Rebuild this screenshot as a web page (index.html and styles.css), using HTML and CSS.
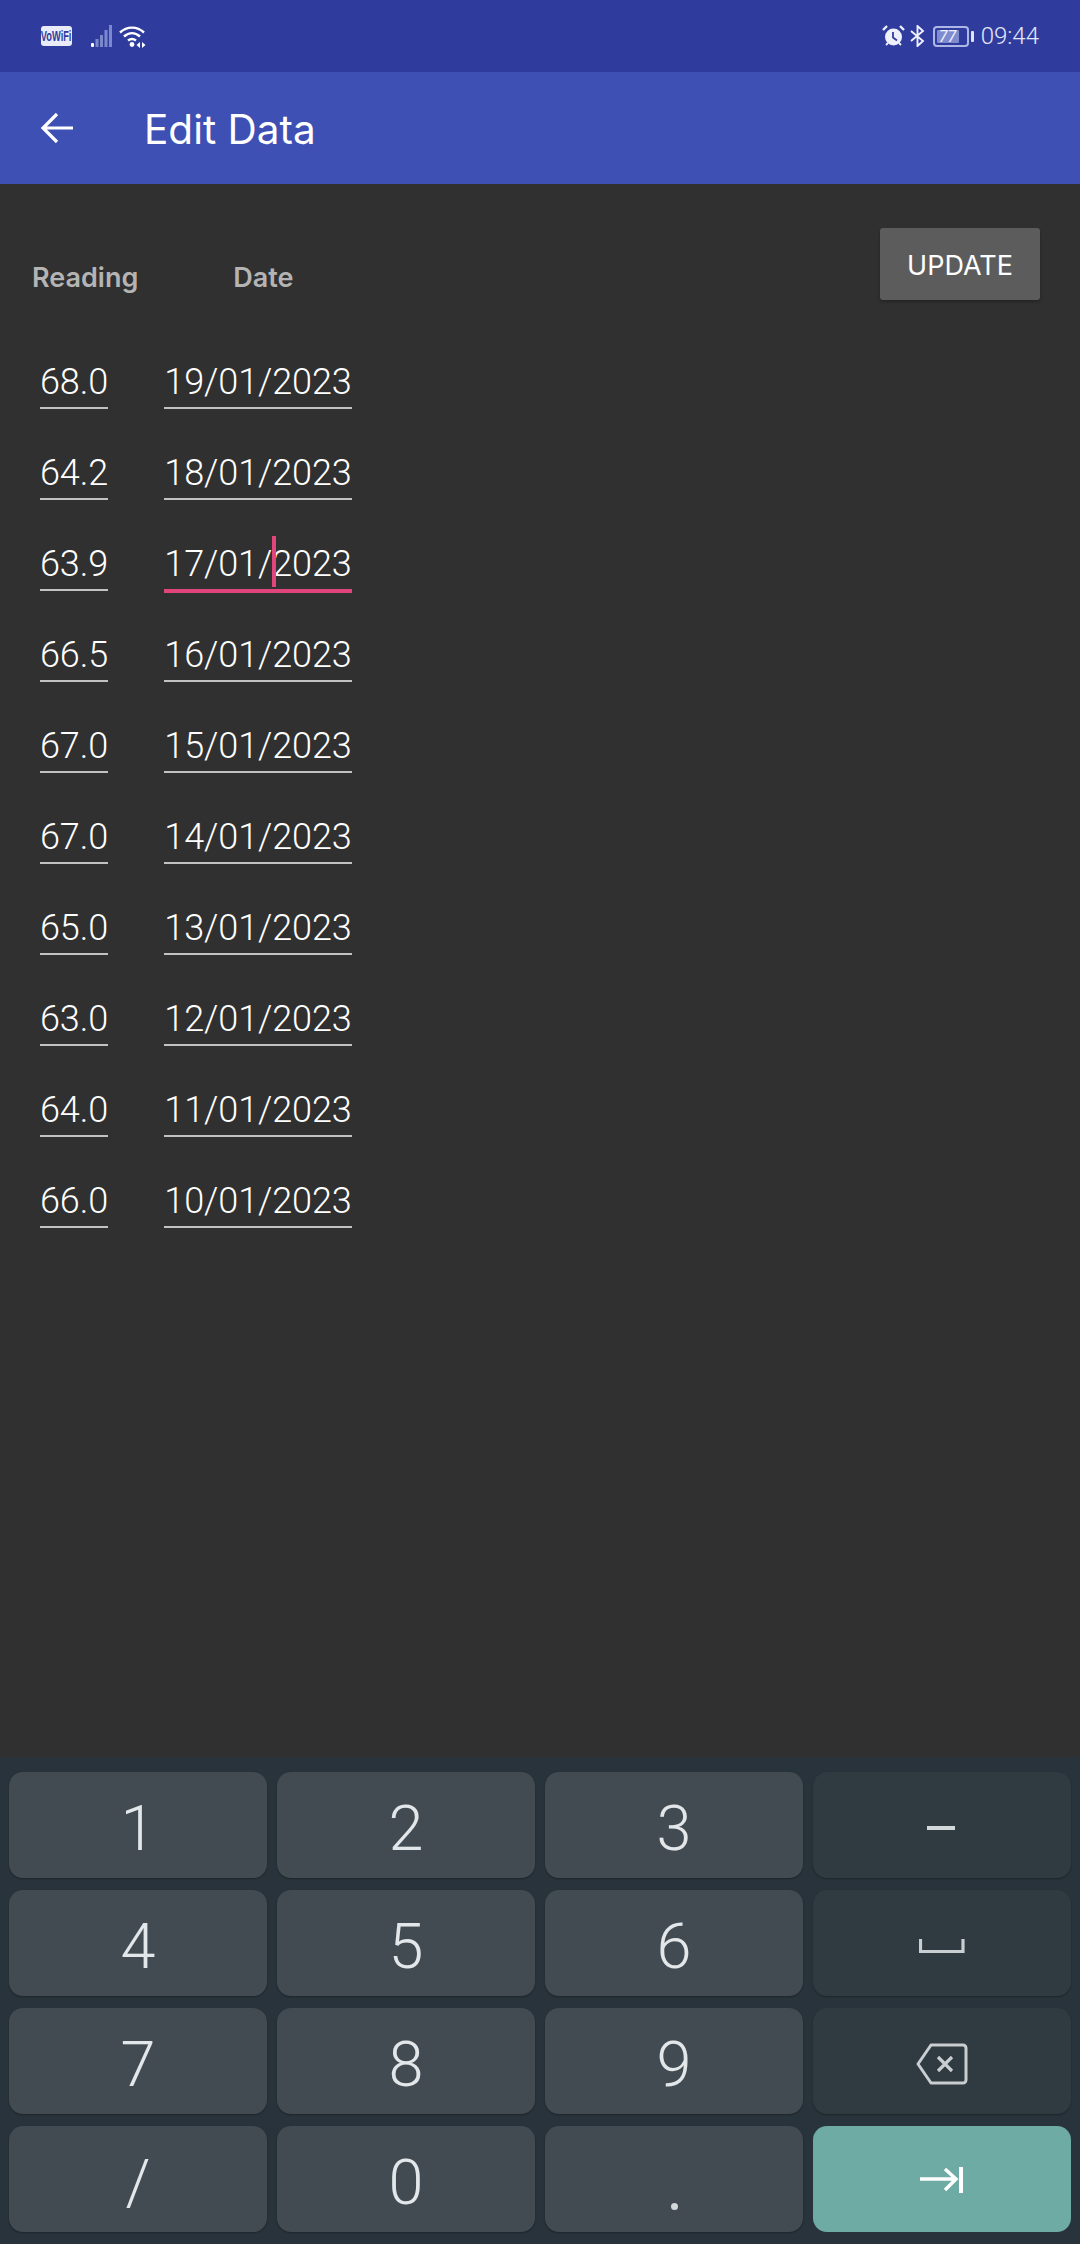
FILE: index.html
```html
<!DOCTYPE html>
<html lang="en">
<head>
<meta charset="utf-8">
<title>Edit Data</title>
<link rel="stylesheet" href="styles.css">
</head>
<body>
<div class="screen">
  <div class="status">
    <div class="status-left">
      <span class="vowifi"><span class="vowifi-text">VoWiFi</span></span>
      <svg class="signal" width="22" height="24" viewBox="0 0 22 24"><rect x="1" y="19" width="3" height="4" rx="1" fill="#fff"/><g fill="#7c88cc"><rect x="5.500" y="15" width="3" height="8"/><rect x="10" y="11" width="3" height="12"/><rect x="14.500" y="6" width="3" height="17"/><rect x="19" y="1" width="3" height="22"/></g></svg>
      <svg class="wifi" width="28" height="24" viewBox="0 0 28 24"><g fill="none" stroke="#fff" stroke-width="2.4"><path d="M1 8.5C8 2 18 2 25 8.5"/><path d="M5 12.5C10 8 16 8 21 12.5"/><path d="M9 16.5C11.5 14.5 14.5 14.5 17 16.5"/></g><circle cx="13" cy="20.500" r="2.400" fill="#fff"/><path d="M21 18v6l-3.500-3zM23 18v6l3.500-3z" fill="#fff"/></svg>
    </div>
    <div class="status-right">
      <svg class="alarm" width="23" height="22" viewBox="0 0 23 22"><circle cx="11.500" cy="12" r="8.500" fill="#eef0fb"/><path d="M11 7v5.500l4 3" fill="none" stroke="#2f3c9e" stroke-width="1.800"/><path d="M1 5l4-4M22 5l-4-4" stroke="#eef0fb" stroke-width="2.400" fill="none"/><path d="M4 20l2-2M19 20l-2-2" stroke="#eef0fb" stroke-width="1.800" fill="none"/></svg>
      <svg class="bt" width="15" height="22" viewBox="0 0 15 22"><path d="M1 6l12 10-5.500 5V1L13 6 1 16" fill="none" stroke="#eef0fb" stroke-width="1.900"/></svg>
      <div class="battery"><div class="battery-body"><div class="battery-fill"></div><span class="battery-num">77</span></div><div class="battery-nub"></div></div>
      <span class="clock">09:44</span>
    </div>
  </div>
  <div class="appbar">
    <svg class="back" width="34" height="34" viewBox="0 0 34 34"><path d="M33 17H3M17 3L3 17l14 14" fill="none" stroke="#fff" stroke-width="3.200"/></svg>
    <span class="title">Edit Data</span>
  </div>
  <main class="content">
    <div class="head">
      <span class="col-reading">Reading</span>
      <span class="col-date">Date</span>
      <button class="update">UPDATE</button>
    </div>
    <div class="rows">
      <div class="row"><span class="field num">68.0</span><span class="field date">19/01/2023</span></div>
      <div class="row"><span class="field num">64.2</span><span class="field date">18/01/2023</span></div>
      <div class="row"><span class="field num">63.9</span><span class="field date focus">17/01/<span class="caret"></span>2023</span></div>
      <div class="row"><span class="field num">66.5</span><span class="field date">16/01/2023</span></div>
      <div class="row"><span class="field num">67.0</span><span class="field date">15/01/2023</span></div>
      <div class="row"><span class="field num">67.0</span><span class="field date">14/01/2023</span></div>
      <div class="row"><span class="field num">65.0</span><span class="field date">13/01/2023</span></div>
      <div class="row"><span class="field num">63.0</span><span class="field date">12/01/2023</span></div>
      <div class="row"><span class="field num">64.0</span><span class="field date">11/01/2023</span></div>
      <div class="row"><span class="field num">66.0</span><span class="field date">10/01/2023</span></div>
    </div>
  </main>
  <div class="keyboard">
    <div class="key">1</div><div class="key">2</div><div class="key">3</div>
    <div class="key fn"><svg width="30" height="6" viewBox="0 0 30 6"><rect y="1" width="28" height="4" fill="#d3d8da"/></svg></div>
    <div class="key">4</div><div class="key">5</div><div class="key">6</div>
    <div class="key fn"><svg width="46" height="16" viewBox="0 0 46 16"><path d="M1.500 1v12.500h42.500V1" fill="none" stroke="#c9ced1" stroke-width="3.200"/></svg></div>
    <div class="key">7</div><div class="key">8</div><div class="key">9</div>
    <div class="key fn"><svg width="52" height="42" viewBox="0 0 52 42"><path d="M15 2h32a3 3 0 0 1 3 3v32a3 3 0 0 1-3 3H15L2 21z" fill="none" stroke="#c9ced1" stroke-width="3" stroke-linejoin="round"/><path d="M22 14l14 14M36 14L22 28" fill="none" stroke="#c9ced1" stroke-width="3.200"/></svg></div>
    <div class="key">/</div><div class="key">0</div><div class="key dot"><span class="dot-mark"></span></div>
    <div class="key go"><svg width="44" height="28" viewBox="0 0 44 28"><path d="M0 13h36M25 3l11 10-11 11" fill="none" stroke="#fff" stroke-width="3.400"/><rect x="39" y="1" width="4" height="26" fill="#fff"/></svg></div>
  </div>
</div>
</body>
</html>
```
FILE: styles.css
```css
* { box-sizing: border-box; }
html, body { margin: 0; padding: 0; }
body { background: #303030; font-family: "Inter", "Liberation Sans", sans-serif; }
.screen { width: 1080px; height: 2244px; display: flex; flex-direction: column; overflow: hidden; background: #303030; color: #fff; }

.status { height: 72px; flex: none; background: #2f3c9e; display: flex; justify-content: space-between; align-items: center; padding: 0 41px; }
.status-left, .status-right { display: flex; align-items: center; }
.vowifi { width: 31px; height: 20px; background: #e9ebf8; border-radius: 3px; display: flex; justify-content: center; overflow: hidden; }
.vowifi-text { display: block; flex: none; transform: scaleX(.66); color: #2f3c9e; font: 700 14px/20px "Liberation Sans", sans-serif; white-space: nowrap; }
.signal { margin-left: 18px; }
.wifi { margin-left: 7px; }
.status-right { gap: 7px; }
.alarm { margin-right: -2px; }
.battery { display: flex; align-items: center; margin-left: 1px; gap: 2px; }
.battery-body { position: relative; width: 36px; height: 21px; border: 2px solid #aeb6e6; border-radius: 4px; padding: 2px; }
.battery-fill { width: 22px; height: 100%; background: #7f8bcf; border-radius: 1px; }
.battery-num { position: absolute; left: 4px; top: 0; font: italic 400 16px/17px "Roboto", sans-serif; color: #eef0fb; }
.battery-nub { width: 3px; height: 11px; background: #dfe3f5; border-radius: 1px; }
.clock { font: 300 24px/1 "Roboto", sans-serif; color: #e3e6f6; }

.appbar { height: 112px; flex: none; background: #3e50b4; display: flex; align-items: center; padding-left: 40px; }
.title { margin: 5px 0 0 70px; font: 400 40.500px/1 "Inter", sans-serif; color: #fff; }

.content { flex: 1; }
.head { height: 169px; display: flex; align-items: flex-start; padding: 44px 40px 0 32px; }
.col-reading, .col-date { font-size: 27px; font-weight: 600; color: #b4b4b4; margin-top: 34px; line-height: 32px; }
.col-date { margin-left: 95px; }
.update { margin-left: auto; width: 160px; height: 72px; background: #5c5c5d; color: #fff; border: 0; border-radius: 3px; font: 400 27px/1 "Inter", sans-serif; box-shadow: 0 2px 3px rgba(0,0,0,.25); padding: 2px 0 0; }

.rows { display: flex; flex-direction: column; padding-left: 40px; }
.row { display: flex; height: 91px; gap: 56px; align-items: flex-start; }
.field { display: block; height: 56px; border-bottom: 2px solid #c2c2c2; font: 350 36px/58px "Roboto", sans-serif; letter-spacing: -.1px; color: #fff; white-space: nowrap; }
.num { width: 68px; text-align: center; }
.date { width: 188px; text-align: center; }
.focus { position: relative; height: 58px; border-bottom: 4px solid #e0467c; }
.caret { position: absolute; left: 108px; top: 1px; width: 4px; height: 51px; background: #e0467c; }

.keyboard { flex: none; height: 487px; background: #29333b; padding: 15px 9px 12px; display: grid; grid-template-columns: repeat(4, 258px); grid-auto-rows: 106px; column-gap: 10px; row-gap: 12px; }
.key { display: flex; align-items: center; justify-content: center; padding-top: 6px; background: #414b51; border-radius: 14px; box-shadow: 0 1px 2px rgba(0,0,0,.3); color: #e3e7ea; font: 340 63px/1 "Roboto", sans-serif; }
.fn { background: #2f3a41; }
.go { background: #6eaba5; box-shadow: none; padding-top: 2px; }
.dot { align-items: flex-end; }
.dot-mark { width: 7px; height: 7px; border-radius: 50%; background: #d3d8da; margin-bottom: 22px; }
```
